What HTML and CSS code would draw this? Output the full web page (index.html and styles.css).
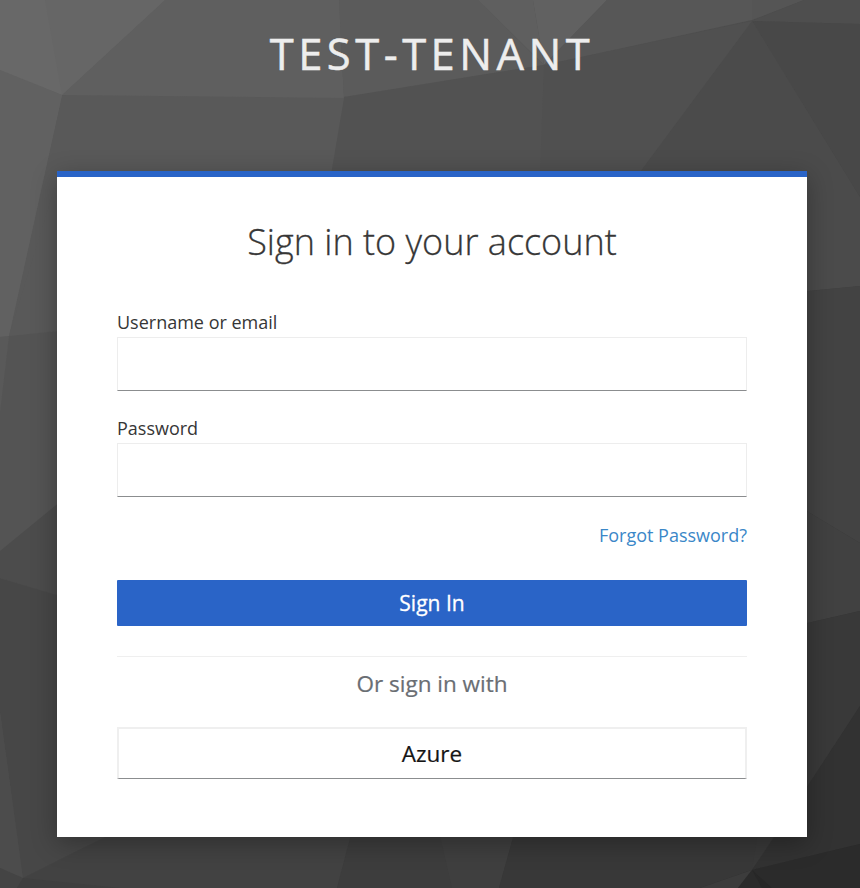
FILE: index.html
```html
<!DOCTYPE html>
<html lang="en">
<head>
<meta charset="utf-8">
<title>Sign in to Test-Tenant</title>
<link rel="stylesheet" href="styles.css">
</head>
<body>
<svg class="backdrop" viewBox="0 0 860 888" preserveAspectRatio="none" aria-hidden="true">
  <defs>
    <linearGradient id="base" x1="0" y1="0" x2="1" y2="1">
      <stop offset="0" stop-color="#686868"/>
      <stop offset=".5" stop-color="#4a4a4a"/>
      <stop offset="1" stop-color="#2b2b2b"/>
    </linearGradient>
  </defs>
  <rect width="860" height="888" fill="url(#base)"/>
  <path fill="#686868" d="M0 0H165L62 95L0 70Z"/>
  <path fill="#666666" d="M45 0H165L62 95Z"/>
  <path fill="#5f5f5f" d="M165 0H339L344 99L62 95Z"/>
  <path fill="#5b5b5b" d="M339 0H478L544 65L430 83L344 97Z"/>
  <path fill="#5f5f5f" d="M478 0H533L544 65Z"/>
  <path fill="#616161" d="M533 0H607L544 65Z"/>
  <path fill="#575757" d="M607 0H752V20L544 65Z"/>
  <path fill="#555555" d="M752 0H804L752 20Z"/>
  <path fill="#4e4e4e" d="M804 0H860V24L752 21Z"/>
  <path fill="#484848" d="M752 21L860 24V197Z"/>
  <path fill="#4b4b4b" d="M752 21L860 197V286L807 291L600 300V226Z"/>
  <path fill="#505050" d="M544 65L752 21L600 226H536Z"/>
  <path fill="#525252" d="M344 97L544 65L538 226H320Z"/>
  <path fill="#595959" d="M62 95L344 98L320 240H57L9 336Z"/>
  <path fill="#616161" d="M0 70L62 95L9 336L0 337Z"/>
  <path fill="#595959" d="M0 337L9 336L0 413ZM9 336L57 180V331Z"/>
  <path fill="#545454" d="M9 336L100 327V480L0 551V413Z"/>
  <path fill="#4c4c4c" d="M0 551L100 469V608L0 578Z"/>
  <path fill="#474747" d="M0 578L100 608V840L23 878L0 712Z"/>
  <path fill="#4c4c4c" d="M0 712L23 878L0 868Z"/>
  <path fill="#444444" d="M0 868L23 878L17 888H0Z"/>
  <path fill="#424242" d="M23 878L125 827H353L337 888H17Z"/>
  <path fill="#3f3f3f" d="M23 878L120 888H17Z"/>
  <path fill="#3d3d3d" d="M353 827H516L499 888H337Z"/>
  <path fill="#3f3f3f" d="M438 827H516L499 888H452Z"/>
  <path fill="#383838" d="M516 827H780L752 870L700 888H499Z"/>
  <path fill="#3c3c3c" d="M752 870L738 888H700Z"/>
  <path fill="#434343" d="M790 293L860 286V543L790 501Z"/>
  <path fill="#414141" d="M790 501L860 543V611L790 627Z"/>
  <path fill="#393939" d="M790 627L860 611V706L774 840L752 870Z"/>
  <path fill="#323232" d="M860 706V844L752 870L774 837Z"/>
  <path fill="#2b2b2b" d="M752 870L860 844V888H738Z"/>
  <path fill="#272727" d="M752 870L772 888H762Z"/>
</svg>
<div class="page">
  <header class="realm">TEST-TENANT</header>
  <main class="card">
    <h1 class="title">Sign in to your account</h1>
    <form class="form">
      <label class="label" for="username">Username or email</label>
      <input class="field" id="username" type="text">
      <label class="label" for="password">Password</label>
      <input class="field" id="password" type="password">
      <div class="options"><a class="forgot" href="#">Forgot Password?</a></div>
      <button class="submit" type="button">Sign In</button>
    </form>
    <section class="social">
      <h2 class="social-title">Or sign in with</h2>
      <a class="provider" href="#">Azure</a>
    </section>
  </main>
</div>
</body>
</html>
```
FILE: styles.css
```css
* { box-sizing: border-box; }
body {
  margin: 0;
  height: 888px;
  overflow: hidden;
  background: #494949;
  color: #363636;
  font-family: "Open Sans", sans-serif;
}
.backdrop {
  position: absolute;
  inset: 0;
  z-index: -1;
  width: 860px;
  height: 888px;
}
.page { width: 750px; margin-left: 57px; }
.realm {
  height: 171px;
  padding-top: 23px;
  color: #ededed;
  font-size: 43.5px;
  line-height: 62px;
  letter-spacing: 4.5px;
  text-align: center;
  -webkit-text-stroke: .5px #ededed;
}
.card {
  height: 666px;
  padding: 36px 60px 0;
  border-top: 6px solid #2a64c7;
  background: #fff;
  box-shadow: 0 6px 24px rgba(3, 3, 3, .3);
}
.title {
  margin: 0 0 39px;
  font-size: 36px;
  font-weight: 300;
  line-height: 58px;
  text-align: center;
  -webkit-text-stroke: .3px #363636;
}
.form { display: flex; flex-direction: column; }
.label { height: 27px; font-size: 18px; line-height: 25px; }
.field {
  height: 54px;
  margin: 0 0 25px;
  padding: 4px 9px;
  border: 1px solid #ededed;
  border-bottom-color: #8b8d8f;
  border-radius: 0;
  background: #fff;
  font: inherit;
}
.options {
  display: flex;
  justify-content: flex-end;
  height: 58px;
  font-size: 18px;
  line-height: 27px;
}
.forgot { color: #3a87c8; text-decoration: none; }
.submit {
  height: 46px;
  padding: 0;
  border: 0;
  border-radius: 1px;
  background: #2a64c7;
  color: #fff;
  font: 21px/46px "Open Sans", sans-serif;
  -webkit-text-stroke: .3px #fff;
}
.social { margin-top: 30px; border-top: 1px solid #efefef; }
.social-title {
  margin: 9px 0 26px;
  color: #6a6e73;
  font-size: 22.5px;
  font-weight: 400;
  line-height: 35px;
  text-align: center;
  -webkit-text-stroke: .2px #6a6e73;
}
.provider {
  display: block;
  height: 52px;
  border: 2px solid #efefef;
  border-bottom: 1px solid #8b8d8f;
  color: #151515;
  font-size: 22.5px;
  line-height: 50px;
  text-align: center;
  text-decoration: none;
  -webkit-text-stroke: .2px #151515;
}
```
